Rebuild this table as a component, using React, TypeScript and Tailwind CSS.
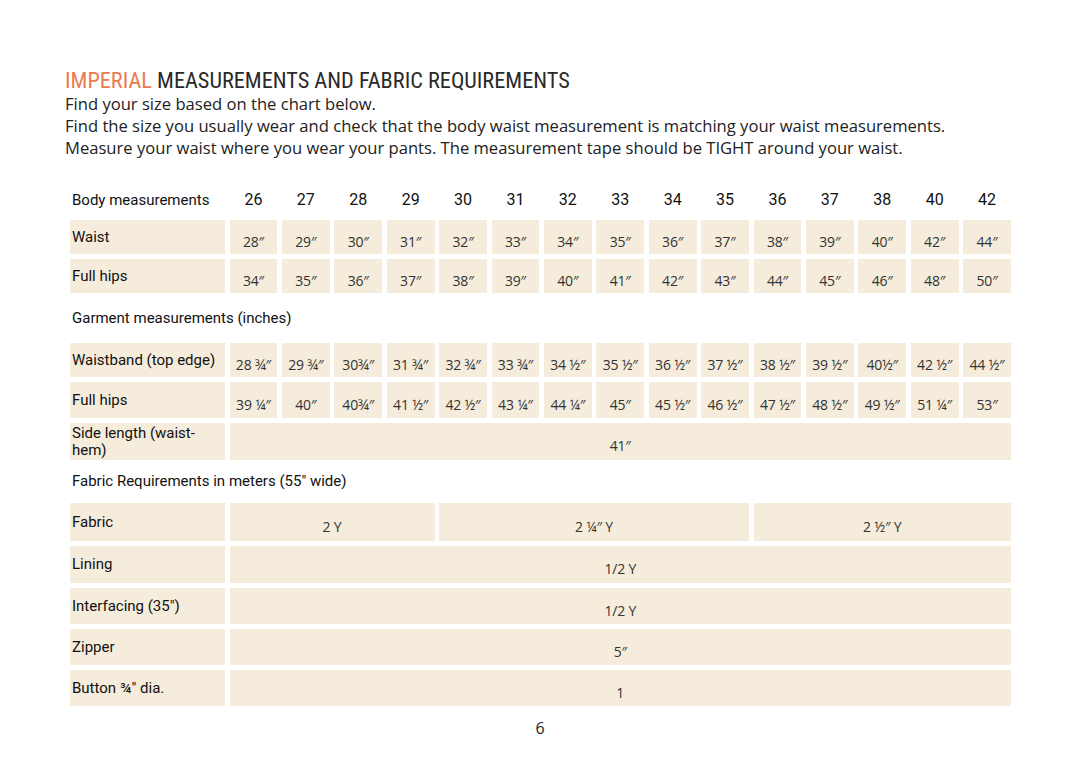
import React from "react";

const sizes = ["26","27","28","29","30","31","32","33","34","35","36","37","38","40","42"];
const waist = ["28″","29″","30″","31″","32″","33″","34″","35″","36″","37″","38″","39″","40″","42″","44″"];
const hips = ["34″","35″","36″","37″","38″","39″","40″","41″","42″","43″","44″","45″","46″","48″","50″"];
const waistband = ["28 ¾″","29 ¾″","30¾″","31 ¾″","32 ¾″","33 ¾″","34 ½″","35 ½″","36 ½″","37 ½″","38 ½″","39 ½″","40½″","42 ½″","44 ½″"];
const ghips = ["39 ¼″","40″","40¾″","41 ½″","42 ½″","43 ¼″","44 ¼″","45″","45 ½″","46 ½″","47 ½″","48 ½″","49 ½″","51 ¼″","53″"];

const labelFont = "font-['Roboto','Liberation_Sans',sans-serif]";
const valFont = "font-['Open_Sans','Lato',sans-serif]";

function Label({ children }: { children: React.ReactNode }) {
  return (
    <div className={`bg-[#f5ecdc] flex items-center pl-[2px] pr-1 text-[15px] leading-[17px] text-[#111] ${labelFont}`}>
      <span>{children}</span>
    </div>
  );
}

function Val({ children, span }: { children: React.ReactNode; span?: string }) {
  return (
    <div className={`bg-[#f5ecdc] flex items-center justify-center pt-[8px] text-[14px] tracking-[-0.2px] text-[#333] whitespace-nowrap ${valFont} ${span ?? ""}`}>
      {children}
    </div>
  );
}

function Section({ children }: { children: React.ReactNode }) {
  return (
    <div className={`col-span-16 flex items-center pl-[2px] text-[15px] text-[#111] ${labelFont}`}>
      {children}
    </div>
  );
}

export default function App() {
  return (
    <div className="w-[1080px] h-[770px] bg-white relative">
      <div className="pl-[65px] pt-[68px]">
        <h1 className="font-['Liberation_Sans_Narrow','Roboto_Condensed','Roboto',sans-serif] text-[22.3px] leading-[24px] text-[#2a2a2a] uppercase">
          <span className="text-[#e97c4f]">Imperial</span> Measurements and Fabric Requirements
        </h1>
        <div className={`${valFont} text-[16.6px] leading-[22px] text-[#222] mt-[1px]`}>
          <p>Find your size based on the chart below.</p>
          <p>Find the size you usually wear and check that the body waist measurement is matching your waist measurements.</p>
          <p>Measure your waist where you wear your pants. The measurement tape should be TIGHT around your waist.</p>
        </div>
      </div>

      <div className="ml-[70px] mt-[26px] w-[941px] grid grid-cols-[155px_repeat(15,1fr)] gap-x-[4.5px] gap-y-[5px] grid-rows-[30px_34px_34px_40px_34px_36px_37px_33px_38px_37px_36px_36px_36px]">
        <div className={`flex items-center pl-[2px] text-[15px] text-[#111] ${labelFont}`}>Body measurements</div>
        {sizes.map((s) => (
          <div key={s} className={`flex items-center justify-center text-[16px] text-[#111] ${labelFont}`}>{s}</div>
        ))}

        <Label>Waist</Label>
        {waist.map((v, i) => <Val key={i}>{v}</Val>)}
        <Label>Full hips</Label>
        {hips.map((v, i) => <Val key={i}>{v}</Val>)}

        <Section>Garment measurements (inches)</Section>

        <Label>Waistband (top edge)</Label>
        {waistband.map((v, i) => <Val key={i}>{v}</Val>)}
        <Label>Full hips</Label>
        {ghips.map((v, i) => <Val key={i}>{v}</Val>)}
        <Label>Side length (waist-<br />hem)</Label>
        <Val span="col-span-15">41″</Val>

        <Section>Fabric Requirements in meters (55″ wide)</Section>

        <Label>Fabric</Label>
        <Val span="col-span-4">2 Y</Val>
        <Val span="col-span-6">2 ¼″ Y</Val>
        <Val span="col-span-5">2 ½″ Y</Val>
        <Label>Lining</Label>
        <Val span="col-span-15">1/2 Y</Val>
        <Label>Interfacing (35″)</Label>
        <Val span="col-span-15">1/2 Y</Val>
        <Label>Zipper</Label>
        <Val span="col-span-15">5″</Val>
        <Label>Button ¾″ dia.</Label>
        <Val span="col-span-15">1</Val>
      </div>

      <div className={`mt-[10px] text-center text-[16px] text-[#222] ${valFont}`}>6</div>
    </div>
  );
}
